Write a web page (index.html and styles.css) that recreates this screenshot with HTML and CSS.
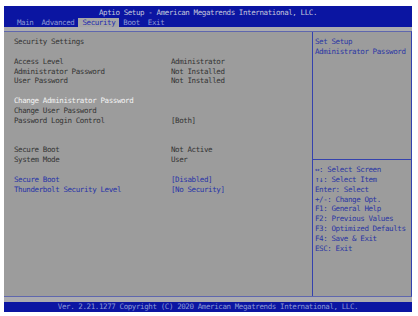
FILE: index.html
```html
<!DOCTYPE html>
<html lang="en">
<head>
    <meta charset="UTF-8">
    <title>Aptio Setup - Security</title>
    <link rel="stylesheet" href="styles.css">
</head>
<body>
    <div class="screen">
        <header>
            <div class="title">Aptio Setup - American Megatrends International, LLC.</div>
            <nav>
                <span class="tab">Main</span>
                <span class="tab">Advanced</span>
                <span class="tab active">Security</span>
                <span class="tab">Boot</span>
                <span class="tab">Exit</span>
            </nav>
        </header>

        <div class="strip"></div>

        <main>
            <section class="settings">
                <div class="row"><span>Security Settings</span></div>
                <div class="row"></div>
                <div class="row"><span class="label">Access Level</span><span>Administrator</span></div>
                <div class="row"><span class="label">Administrator Password</span><span>Not Installed</span></div>
                <div class="row"><span class="label">User Password</span><span>Not Installed</span></div>
                <div class="row"></div>
                <div class="row selected"><span class="label">Change Administrator Password</span></div>
                <div class="row"><span class="label">Change User Password</span></div>
                <div class="row"><span class="label">Password Login Control</span><span>[Both]</span></div>
                <div class="row"></div>
                <div class="row"></div>
                <div class="row"><span class="label">Secure Boot</span><span>Not Active</span></div>
                <div class="row"><span class="label">System Mode</span><span>User</span></div>
                <div class="row"></div>
                <div class="row option"><span class="label">Secure Boot</span><span>[Disabled]</span></div>
                <div class="row option"><span class="label">Thunderbolt Security Level</span><span>[No Security]</span></div>
            </section>

            <aside class="help">
                <div class="help-top">
                    <div class="row">Set Setup</div>
                    <div class="row">Administrator Password</div>
                </div>
                <div class="keys">
                    <div class="row">&#8596;: Select Screen</div>
                    <div class="row">&#8593;&#8595;: Select Item</div>
                    <div class="row">Enter: Select</div>
                    <div class="row">+/-: Change Opt.</div>
                    <div class="row">F1: General Help</div>
                    <div class="row">F2: Previous Values</div>
                    <div class="row">F3: Optimized Defaults</div>
                    <div class="row">F4: Save &amp; Exit</div>
                    <div class="row">ESC: Exit</div>
                </div>
            </aside>
        </main>

        <div class="strip bottom"></div>

        <footer>Ver. 2.21.1277 Copyright (C) 2020 American Megatrends International, LLC.</footer>
    </div>
</body>
</html>
```

FILE: styles.css
```css
/* Aptio setup screen */
body {
    margin: 0;
    background-color: #ffffff;
    font-family: 'DejaVu Sans Mono', 'Liberation Mono', monospace;
    font-size: 7.5px;
    letter-spacing: -0.4px;
}

.screen {
    width: 408px;
    height: 306px;
    margin: 6px 0 0 4px;
    display: flex;
    flex-direction: column;
    background-color: #9c9c9c;
}

header {
    height: 21px;
    background-color: #0b15a2;
    display: flex;
    flex-direction: column;
}

.title {
    height: 12px;
    line-height: 14px;
    text-align: center;
    color: #c4c8dc;
}

nav {
    display: flex;
    height: 9px;
    padding-left: 9px;
}

.tab {
    padding: 0 4px;
    line-height: 9px;
    color: #8e9bd6;
}

.tab.active {
    background-color: #a6a6a6;
    color: #1f2bb0;
}

.strip {
    height: 4px;
    background-color: #ababaf;
}

.strip.bottom {
    height: 5px;
}

/* Main frame */
main {
    flex: 1;
    display: flex;
    border-top: 1px solid #5f67ad;
    border-bottom: 1px solid #5f67ad;
    border-right: 1px solid #3442ae;
}

.row {
    height: 9.85px;
    line-height: 9.85px;
    white-space: nowrap;
}

.settings {
    width: 298px;
    padding: 5px 0 0 10px;
    border-right: 1px solid #3442ae;
    color: #333333;
}

.settings .row {
    display: flex;
}

.label {
    width: 157px;
}

.selected {
    color: #f4f4f4;
}

.option {
    color: #2733a8;
}

.help {
    flex: 1;
    display: flex;
    flex-direction: column;
    color: #2a35a4;
}

.help-top {
    height: 122px;
    padding: 5px 0 0 2px;
    border-bottom: 1px solid #3442ae;
}

.keys {
    padding: 5px 0 0 2px;
}

footer {
    height: 10px;
    line-height: 10px;
    background-color: #0b15a2;
    color: #8e9bd6;
    text-align: center;
}
```
